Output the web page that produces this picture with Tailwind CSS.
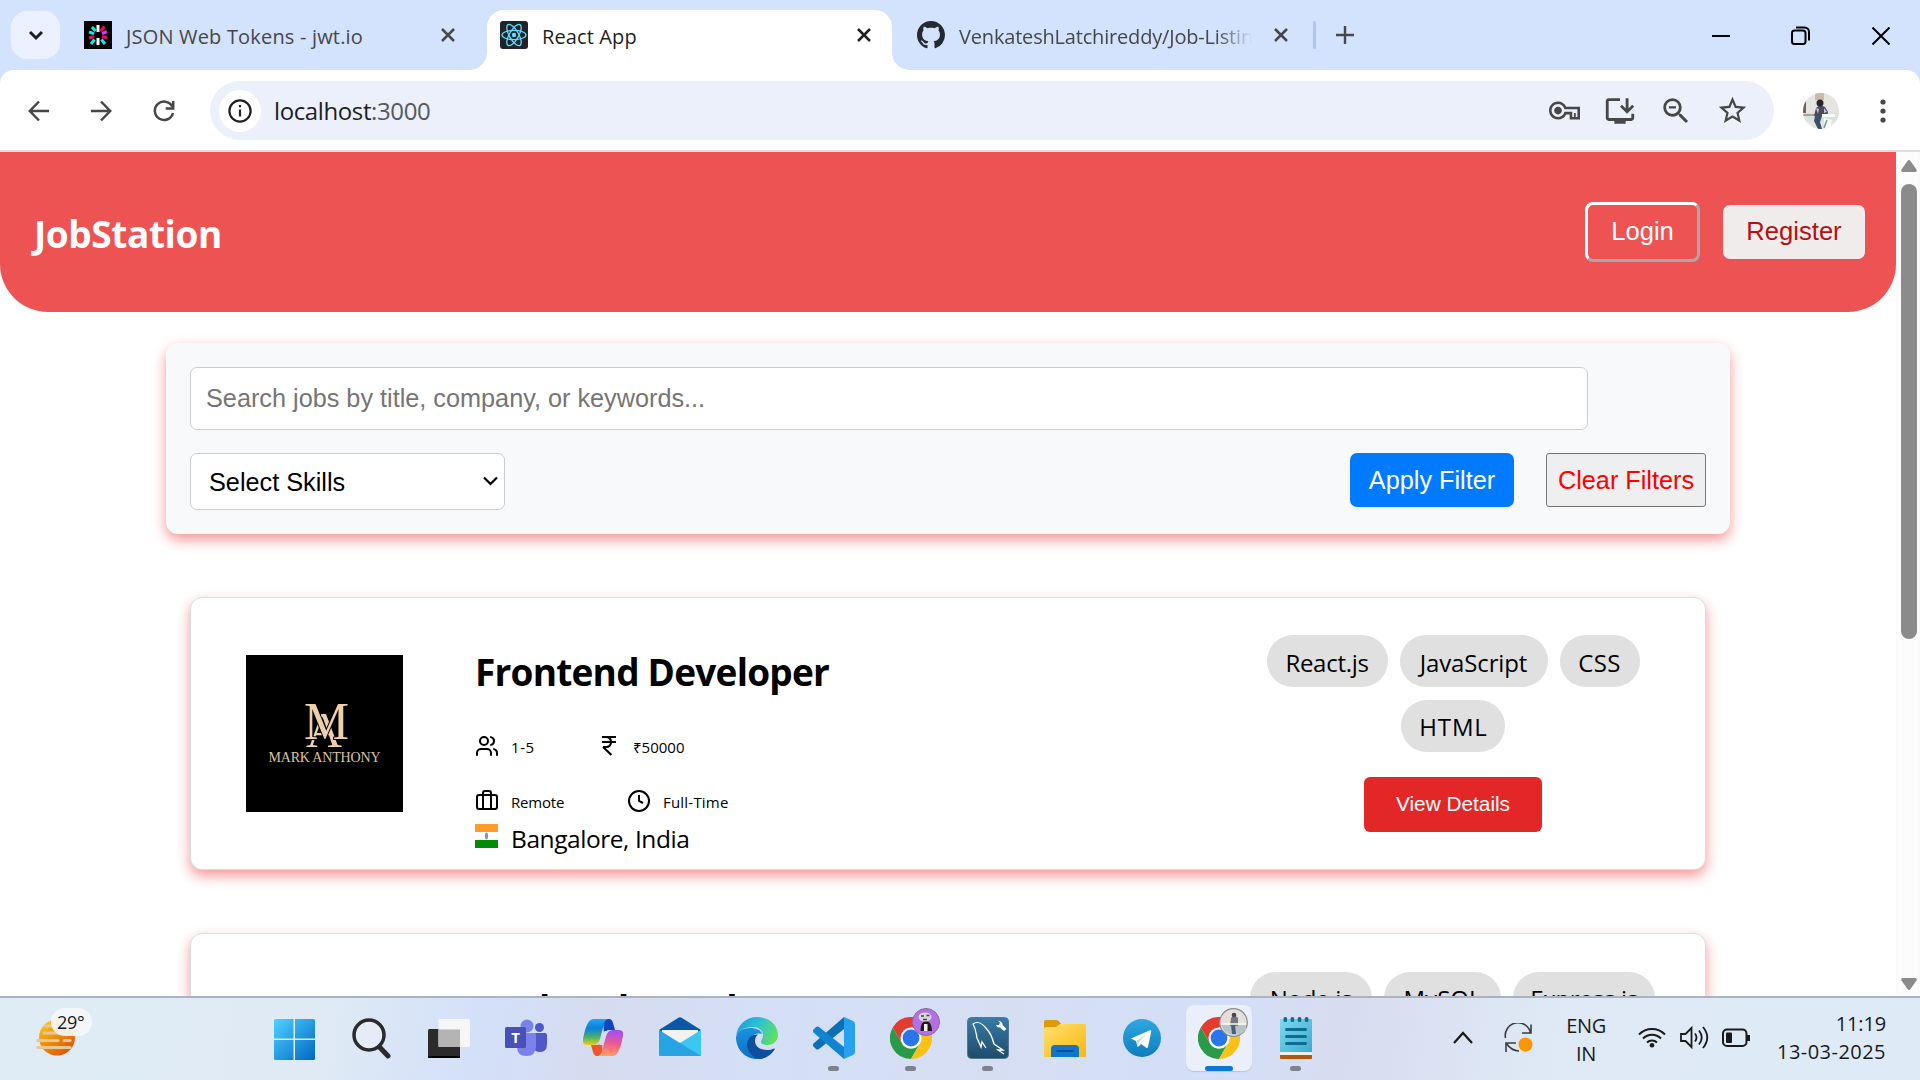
<!DOCTYPE html>
<html lang="en">
<head>
<meta charset="utf-8">
<title>React App</title>
<script src="https://cdn.jsdelivr.net/npm/@tailwindcss/browser@4"></script>
</head>
<body class="flex h-[1080px] w-[1920px] flex-col overflow-hidden bg-white font-['Open_Sans','Noto_Sans',sans-serif] text-black">

<!-- Tab strip -->
<header class="flex h-[70px] shrink-0 items-start bg-[#d3e2fd] text-[20px] leading-[30px] text-[#474747]">
  <button class="mt-[11px] ml-[11px] grid h-12 w-[49px] place-items-center rounded-2xl bg-[#ebf1fe]">
    <svg class="size-[16px]" viewBox="0 0 16 16" fill="none" stroke="#1f1f1f" stroke-width="3"><path d="M2 5l6 6 6-6"/></svg>
  </button>
  <div class="mt-[10px] flex h-[50px] w-[427px] items-center pl-6">
    <svg class="size-7 bg-black" viewBox="0 0 28 28" stroke-width="3">
      <g stroke="#fff"><path d="M14 4v7M14 17v7"/></g>
      <g stroke="#00f2e6"><path d="M10.5 18.500l-3.500 4.500M17.500 18.500l3.500 4.500M5 11l5 1.600M8 6l3.500 4"/></g>
      <g stroke="#fb015b"><path d="M16.500 10L20.500 5.500M23 17l-5-1.500M10 15.500L5 17"/></g>
      <g stroke="#d63aff"><path d="M18 12.500l5-1.800"/></g>
    </svg>
    <span class="ml-[14px] w-[314px] pt-[3px] tracking-[0.009em] whitespace-nowrap">JSON Web Tokens - jwt.io</span>
    <svg class="size-[16px]" viewBox="0 0 16 16" stroke="#474747" stroke-width="2.500"><path d="M2 2l12 12M14 2L2 14"/></svg>
  </div>
  <div class="relative mt-[10px] flex h-[60px] w-[405px] items-center rounded-t-[17px] bg-white pb-[10px] pl-[13px] text-[#1f1f1f]">
    <span class="absolute bottom-0 -left-[17px] size-[17px] bg-[radial-gradient(circle_at_0_0,transparent_16.5px,#fff_17px)]"></span>
    <span class="absolute -right-[17px] bottom-0 size-[17px] bg-[radial-gradient(circle_at_100%_0,transparent_16.5px,#fff_17px)]"></span>
    <svg class="size-7 rounded-[3px] bg-[#20232a]" viewBox="-14 -14 28 28" fill="none" stroke="#61dafb" stroke-width="1.300">
      <ellipse rx="12" ry="4.600"/><ellipse rx="12" ry="4.600" transform="rotate(60)"/><ellipse rx="12" ry="4.600" transform="rotate(120)"/><circle r="2.200" fill="#61dafb" stroke="none"/>
    </svg>
    <span class="w-[328px] pt-[3px] pl-[14px] tracking-[0.006em]">React App</span>
    <svg class="size-[16px]" viewBox="0 0 16 16" stroke="#1f1f1f" stroke-width="2.500"><path d="M2 2l12 12M14 2L2 14"/></svg>
  </div>
  <div class="mt-[10px] flex h-[50px] items-center pl-[25px]">
    <svg class="size-7" viewBox="0 0 16 16" fill="#24292f"><path d="M8 0C3.58 0 0 3.58 0 8c0 3.54 2.29 6.53 5.47 7.59.4.07.55-.17.55-.38 0-.19-.01-.82-.01-1.49-2.01.37-2.53-.49-2.69-.94-.09-.23-.48-.94-.82-1.13-.28-.15-.68-.52-.01-.53.63-.01 1.08.58 1.23.82.72 1.21 1.87.87 2.33.66.07-.52.28-.87.51-1.07-1.78-.2-3.64-.89-3.64-3.95 0-.87.31-1.59.82-2.15-.08-.2-.36-1.02.08-2.12 0 0 .67-.21 2.2.82.64-.18 1.32-.27 2-.27s1.36.09 2 .27c1.53-1.04 2.2-.82 2.2-.82.44 1.1.16 1.92.08 2.12.51.56.82 1.27.82 2.15 0 3.07-1.87 3.75-3.65 3.95.29.25.54.73.54 1.48 0 1.07-.01 1.93-.01 2.2 0 .21.15.46.55.38A8.01 8.01 0 0 0 16 8c0-4.42-3.58-8-8-8z"/></svg>
    <span class="ml-[14px] w-[293px] overflow-hidden mask-r-from-88% pt-[3px] tracking-[-0.009em] whitespace-nowrap">VenkateshLatchireddy/Job-Listing</span>
    <svg class="ml-[21px] size-[16px]" viewBox="0 0 16 16" stroke="#474747" stroke-width="2.500"><path d="M2 2l12 12M14 2L2 14"/></svg>
    <span class="ml-[24px] h-7 w-[3px] rounded-full bg-[#a8c7fa]"></span>
    <svg class="ml-[20px] size-[18px]" viewBox="0 0 18 18" stroke="#474747" stroke-width="2.400"><path d="M9 0v18M0 9h18"/></svg>
  </div>
  <div class="mt-[26px] mr-[30px] ml-auto flex items-center text-black">
    <svg class="size-[18px]" viewBox="0 0 18 18" stroke="currentColor" stroke-width="2"><path d="M0 9h18"/></svg>
    <svg class="ml-[61px] size-[19px]" viewBox="0 0 19 19" fill="none" stroke="currentColor" stroke-width="2"><rect x="1" y="4.500" width="13.500" height="13.500" rx="2.500"/><path d="M5 1.500h8.500a4.500 4.500 0 0 1 4.500 4.500v8.500"/></svg>
    <svg class="ml-[62px] size-[18px]" viewBox="0 0 18 18" stroke="currentColor" stroke-width="2"><path d="M.5.5l17 17M17.500.5l-17 17"/></svg>
  </div>
</header>

<!-- Toolbar -->
<div class="shrink-0 bg-[#d3e2fd]">
<div class="flex h-[82px] items-center rounded-t-[14px] border-b-2 border-[#dcdee1] bg-white pt-px pr-[34px] pl-7 text-[#474747]">
  <svg class="h-[22px] w-[21px]" viewBox="0 0 21 22" fill="none" stroke="currentColor" stroke-width="2.500"><path d="M21 11H2M11 1.500L1.800 11l9.200 9.500"/></svg>
  <svg class="ml-[42px] h-[22px] w-[21px]" viewBox="0 0 21 22" fill="none" stroke="currentColor" stroke-width="2.500"><path d="M0 11h19M10 1.500l9.200 9.500-9.200 9.500"/></svg>
  <svg class="ml-[41px] size-[22px]" viewBox="0 0 22 22" fill="none" stroke="currentColor" stroke-width="2.500"><path d="M20 13a9.200 9.200 0 1 1-.8-6.500"/><path d="M20.200 1v7.500h-7.500"/></svg>
  <div class="ml-[35px] flex h-[59px] w-[1564px] items-center rounded-full bg-[#ebf0fa] pr-[25px] pl-[9px]">
    <span class="grid size-[42px] place-items-center rounded-full bg-white">
      <svg class="size-6" viewBox="0 0 24 24" fill="none" stroke="#1f1f1f" stroke-width="2.200"><circle cx="12" cy="12" r="10.600"/><path d="M12 10.500v7M12 6v2.300"/></svg>
    </span>
    <span class="ml-[13px] pt-px text-[24px] leading-[32px] tracking-[-0.016em] text-[#1f1f1f]">localhost<span class="text-[#55585c]">:3000</span></span>
    <svg class="ml-auto size-[31px]" viewBox="0 0 24 24" fill="currentColor"><path d="M22 19h-6v-4h-2.680c-1.140 2.420-3.600 4-6.320 4-3.860 0-7-3.140-7-7s3.140-7 7-7c2.720 0 5.170 1.580 6.320 4H24v10h-2zm-4-2h4v-6H11.940l-.23-.67C11.010 8.340 9.110 7 7 7c-2.760 0-5 2.240-5 5s2.240 5 5 5c2.110 0 4.010-1.340 4.710-3.330l.23-.67H18v4zM7 15c-1.650 0-3-1.350-3-3s1.350-3 3-3 3 1.350 3 3-1.350 3-3 3zM19.300 14h1.400v3.500h-1.400z"/></svg>
    <svg class="ml-[23px] size-[34px]" viewBox="0 0 24 24" fill="currentColor"><path d="M20 17H4V5h8V3H4c-1.100 0-2 .9-2 2v12c0 1.100.9 2 2 2h4v2h8v-2h4c1.100 0 2-.9 2-2v-3h-2v3zM17 14l5-5-1.410-1.410L18 10.170V3h-2v7.170l-2.590-2.580L12 9l5 5z"/></svg>
    <svg class="ml-[22px] size-[34px]" viewBox="0 0 24 24" fill="currentColor"><path d="M15.500 14h-.79l-.28-.27A6.471 6.471 0 0 0 16 9.500 6.500 6.500 0 1 0 9.500 16c1.610 0 3.090-.59 4.230-1.570l.27.28v.79l5 4.990L20.490 19l-4.990-5zm-6 0C7.010 14 5 11.990 5 9.500S7.010 5 9.500 5 14 7.010 14 9.500 11.990 14 9.500 14zM7 8.700h5v1.600H7z"/></svg>
    <svg class="ml-[23px] size-[33px]" viewBox="0 0 24 24" fill="currentColor"><path d="m22 9.240-7.190-.62L12 2 9.190 8.630 2 9.240l5.460 4.730L5.820 21 12 17.270 18.180 21l-1.630-7.030L22 9.240zM12 15.400l-3.760 2.270 1-4.280-3.320-2.880 4.380-.38L12 6.100l1.710 4.040 4.380.38-3.320 2.880 1 4.280L12 15.400z"/></svg>
  </div>
  <svg class="ml-[29px] size-9 rounded-full" viewBox="0 0 36 36">
    <rect width="36" height="36" fill="#e6e4df"/><rect width="36" height="9" y="20" fill="#d5e2df"/><rect x="12" width="9" height="7" fill="#c9bca6"/><rect y="5" width="3" height="15" fill="#6c6256"/><rect x="0" y="21" width="12" height="2" fill="#a9a596"/>
    <path d="M11 23l2-8 4-3 5 2 3 5-1 5z" fill="#4a4a5a"/><circle cx="17" cy="10" r="3.500" fill="#2b2527"/><path d="M12 23h7l-2 6 2 7h-4l-4-8z" fill="#39506f"/><path d="M13 15l3 1-1 5zM21 15l3 4-3 1z" fill="#b9c6e0"/><path d="M19 21h13v3H19zM21 25l8 2-2 8h-6z" fill="#f6faf8"/><path d="M24 27l-3 8" stroke="#77998a" stroke-width="1.500"/>
  </svg>
  <svg class="ml-auto h-6 w-[6px]" viewBox="0 0 6 24" fill="currentColor"><circle cx="3" cy="3" r="2.600"/><circle cx="3" cy="12" r="2.600"/><circle cx="3" cy="21" r="2.600"/></svg>
</div>
</div>

<!-- Page viewport -->
<div class="flex h-[844px] shrink-0 overflow-hidden">
  <main class="w-[1896px] overflow-hidden">
    <nav class="flex h-40 items-center rounded-b-[48px] bg-[#ee5353] pr-[31px] pl-[34px]">
      <h1 class="pt-[3px] text-[37px] leading-[40px] font-bold tracking-[-0.011em] text-white">JobStation</h1>
      <button class="ml-auto h-[60px] w-[115px] rounded-[8px] border-3 border-t-white border-r-[#a9a9a9] border-b-[#a9a9a9] border-l-white pb-px font-['Liberation_Sans',sans-serif] text-[25.6px] text-white">Login</button>
      <button class="ml-[23px] h-[54px] w-[142px] rounded-[7px] bg-[#f0eceb] pb-px font-['Liberation_Sans',sans-serif] text-[25.6px] text-[#b80f0f]">Register</button>
    </nav>

    <section class="mt-[31px] ml-[166px] h-[191px] w-[1564px] rounded-[12px] bg-[#f8f9fb] px-6 pt-6 font-['Liberation_Sans',sans-serif] text-[25.25px] shadow-[0_6px_13px_rgba(238,83,83,0.6)]">
      <input class="block h-[63px] w-[1398px] rounded-[7px] border border-[#ccc] bg-white px-[15px] placeholder:text-[#757575]" placeholder="Search jobs by title, company, or keywords...">
      <div class="mt-[23px] flex">
        <div class="flex h-[57px] w-[315px] items-center justify-between rounded-[7px] border border-[#ccc] bg-white pr-[6px] pl-[18px]">
          <span class="pt-[2px]">Select Skills</span>
          <svg class="mb-px h-[10px] w-[15px]" viewBox="0 0 15 10" fill="none" stroke="#000" stroke-width="2.200"><path d="M1 1.500L7.500 8 14 1.500"/></svg>
        </div>
        <button class="ml-auto h-[54px] w-[164px] rounded-[7px] bg-[#007bff] pt-[2px] text-white">Apply Filter</button>
        <button class="ml-8 h-[54px] w-[160px] rounded-[3px] border border-[#767676] bg-[#efefef] pt-[2px] text-[red]">Clear Filters</button>
      </div>
    </section>

    <article class="mt-[63px] ml-[190px] flex h-[273px] w-[1516px] rounded-[12px] border border-[#ddd] bg-white shadow-[0_6px_13px_rgba(238,83,83,0.6)]">
      <svg class="mt-[57px] ml-[55px] size-[157px] shrink-0 bg-black" viewBox="0 0 157 157" fill="#ecd0ab">
        <text class="font-['Liberation_Serif',serif] text-[50px]" x="60" y="92">A</text>
        <text class="font-['Liberation_Serif',serif] text-[52px]" x="58" y="84" textLength="45" lengthAdjust="spacingAndGlyphs" stroke="#000" stroke-width="2" paint-order="stroke">M</text>
        <text class="font-['Liberation_Serif',serif] text-[14px]" x="22.500" y="107" fill="#dcc3a4" textLength="112">MARK ANTHONY</text>
      </svg>
      <div class="ml-[72px] w-[600px] pt-[54px]">
        <h2 class="text-[37px] leading-[40px] font-bold tracking-[-0.021em]">Frontend Developer</h2>
        <div class="mt-[42px] flex h-6 text-[15px] leading-[26px]">
          <svg class="size-6" viewBox="0 0 24 24" fill="none" stroke="currentColor" stroke-width="2" stroke-linecap="round"><path d="M16 21v-2a4 4 0 0 0-4-4H6a4 4 0 0 0-4 4v2"/><circle cx="9" cy="7" r="4"/><path d="M22 21v-2a4 4 0 0 0-3-3.870M16 3.130a4 4 0 0 1 0 7.750"/></svg>
          <span class="ml-[12px] w-[86px] tracking-[0.037em]">1-5</span>
          <svg class="size-6" viewBox="0 0 24 24" fill="none" stroke="currentColor" stroke-width="2.200"><path d="M5 3h14M5 8h14M6 13l8.500 8M6 13h3M9 13c6.670 0 6.670-10 0-10"/></svg>
          <span class="ml-[12px]">₹50000</span>
        </div>
        <div class="mt-[31px] flex h-6 text-[15px] leading-[26px]">
          <svg class="size-6" viewBox="0 0 24 24" fill="none" stroke="currentColor" stroke-width="2"><path d="M16 20V4a2 2 0 0 0-2-2h-4a2 2 0 0 0-2 2v16"/><rect x="2" y="6" width="20" height="14" rx="2"/></svg>
          <span class="ml-[12px] w-[116px] tracking-[-0.013em]">Remote</span>
          <svg class="size-6" viewBox="0 0 24 24" fill="none" stroke="currentColor" stroke-width="2"><circle cx="12" cy="12" r="10"/><path d="M12 6v6l4 2"/></svg>
          <span class="ml-[12px] tracking-[0.014em]">Full-Time</span>
        </div>
        <div class="mt-[8px] flex text-[24.5px] leading-[36px] tracking-[-0.018em]">
          <svg class="mt-[3px] h-6 w-[23px]" viewBox="0 0 23 24"><rect width="23" height="8" fill="#ff9a2b"/><rect y="8" width="23" height="8" fill="#fff"/><rect y="16" width="23" height="8" fill="#058a05"/><ellipse cx="11.500" cy="12" rx="1.600" ry="3.400" fill="#8c8cc8"/></svg>
          <span class="ml-[13px]">Bangalore, India</span>
        </div>
      </div>
      <div class="mr-[63px] ml-auto flex w-[378px] flex-wrap content-start justify-center gap-x-[12px] gap-y-[13px] pt-[37px] text-[24px] leading-[52px]">
        <span class="h-[52px] w-[121px] rounded-full bg-[#e0e0e0] pt-[2px] text-center tracking-[-0.012em]">React.js</span>
        <span class="h-[52px] w-[148px] rounded-full bg-[#e0e0e0] pt-[2px] text-center tracking-[-0.006em]">JavaScript</span>
        <span class="h-[52px] w-[80px] rounded-full bg-[#e0e0e0] pt-[2px] text-center tracking-[0.015em]">CSS</span>
        <span class="h-[52px] w-[104px] rounded-full bg-[#e0e0e0] pt-px pl-px text-center tracking-[0.035em]">HTML</span>
        <div class="flex w-full justify-center pt-3">
          <button class="h-[55px] w-[178px] rounded-[6px] bg-[#e32727] pb-px font-['Liberation_Sans',sans-serif] text-[20.8px] text-white">View Details</button>
        </div>
      </div>
    </article>

    <article class="mt-[63px] ml-[190px] flex h-[273px] w-[1516px] rounded-[12px] border border-[#ddd] bg-white shadow-[0_6px_13px_rgba(238,83,83,0.6)]">
      <div class="ml-[284px] w-[600px] pt-[55px]">
        <h2 class="text-[37px] leading-[40px] font-bold tracking-[-0.021em]">Backend Developer</h2>
      </div>
      <div class="mr-[50px] ml-auto flex content-start gap-x-[12px] pt-[38px] text-[24px] leading-[52px]">
        <span class="h-[52px] w-[122px] rounded-full bg-[#e0e0e0] pt-px text-center tracking-[-0.012em]">Node.js</span>
        <span class="h-[52px] w-[117px] rounded-full bg-[#e0e0e0] pt-px text-center">MySQL</span>
        <span class="h-[52px] w-[142px] rounded-full bg-[#e0e0e0] pt-px text-center tracking-[-0.012em]">Express.js</span>
      </div>
    </article>
  </main>
  <!-- Scrollbar -->
  <div class="flex w-6 flex-col items-center border-x border-[#fafafa] bg-[#fcfcfc] pt-2 pl-[2px]">
    <svg class="h-[12px] w-4" viewBox="0 0 16 12" fill="#8b8b8b"><path d="M6.500 1Q8-.8 9.500 1L15.500 9.500Q16.500 12 14 12H2Q-.5 12 .5 9.500z"/></svg>
    <span class="mt-[12px] h-[455px] w-4 rounded-full bg-[#8b8b8b]"></span>
    <svg class="mt-auto mb-[6px] h-[12px] w-4" viewBox="0 0 16 12" fill="#8b8b8b"><path d="M6.500 11Q8 12.800 9.500 11L15.500 2.500Q16.500 0 14 0H2Q-.5 0 .5 2.500z"/></svg>
  </div>
</div>

<!-- Taskbar -->
<footer class="flex h-[84px] shrink-0 border-t-2 border-[#abb3c3] bg-[linear-gradient(100deg,#e0ecf5_0%,#dfeaf5_17%,#d3e0f8_25%,#d6dcf0_31%,#d4dff6_42%,#d6def2_52%,#d3dff7_63%,#d8dcf0_70%,#dee9f5_80%,#deebf6_100%)] text-[#1a1a1a]">
  <div class="w-[256px] shrink-0 pt-[10px] pl-[36px]">
    <div class="relative h-12 w-14">
      <svg class="absolute top-[11px] left-0 h-[38px] w-10" viewBox="0 0 40 38"><defs><linearGradient id="sun" x1="0" y1="0" x2=".7" y2="1"><stop stop-color="#ffd21c"/><stop offset="1" stop-color="#e35205"/></linearGradient></defs><circle cx="21" cy="18.500" r="18" fill="url(#sun)"/><g stroke="#e2ca93" stroke-width="3.200" stroke-linecap="round"><path d="M9 7h16M8 14h14M1.800 21.500H22M28 21.500h6M1.800 28.500H34"/></g></svg>
      <span class="absolute top-0 left-[15px] h-7 w-[41px] rounded-full bg-[#f6f8fb]/90 pl-[6px] text-[18px] leading-7 tracking-[-0.016em]">29°</span>
    </div>
  </div>
  <div class="grid shrink-0 grid-cols-[repeat(14,77px)]">
    <div class="flex justify-center pt-[21px]">
      <svg class="size-[41px]" viewBox="0 0 41 41"><defs><linearGradient id="win" x1="0" y1="0" x2="1" y2="1"><stop stop-color="#4fd3ff"/><stop offset="1" stop-color="#0067c5"/></linearGradient></defs><path d="M1.500 0h18v19.500H0v-18Q0 0 1.500 0zM21 0h18.500Q41 0 41 1.500v18H21zM0 21h19.500v20h-18Q0 41 0 39.500zM21 21h20v18.500Q41 41 39.500 41H21z" fill="url(#win)"/></svg>
    </div>
    <div class="flex justify-center pt-[20px]">
      <svg class="h-[41px] w-[39px]" viewBox="0 0 39 41" fill="none" stroke="#2b2b2b"><circle cx="17" cy="17" r="15" stroke-width="3.500" fill="#e5ecf6"/><path d="M27.500 29l8.500 9" stroke-width="5" stroke-linecap="round"/></svg>
    </div>
    <div class="flex justify-center pt-[21px]">
      <svg class="h-10 w-[42px]" viewBox="0 0 42 40"><rect y="10" width="32" height="29" rx="1.500" fill="#2b2b2b"/><rect y="37" width="32" height="2" fill="#000"/><rect x="10.500" width="31.500" height="28" rx="1.500" fill="#f6f6f6"/><rect x="10.500" y="10.500" width="21.500" height="17.500" fill="#b4b4b4"/></svg>
    </div>
    <div class="flex justify-center pt-[21px]">
      <svg class="h-[38px] w-[42px]" viewBox="0 0 42 38"><circle cx="34.500" cy="8.500" r="4.500" fill="#4f58c4"/><path d="M30 14h10q2 0 2 2v9q0 8-7 8-5 0-7-4z" fill="#4f58c4"/><circle cx="22" cy="7" r="6.500" fill="#7b83eb"/><path d="M14 14h15q2 0 2 2v11q0 10-9.500 10T12 28z" fill="#7b83eb"/><rect y="8" width="21" height="21" rx="1.500" fill="#4950b8"/><text class="font-['Open_Sans',sans-serif] text-[15px] font-bold" x="10.500" y="24" text-anchor="middle" fill="#fff">T</text></svg>
    </div>
    <div class="flex justify-center pt-[21px]">
      <svg class="h-[37px] w-10" viewBox="0 0 40 37"><defs><linearGradient id="cpa" x1="0" y1="0" x2="0" y2="1"><stop stop-color="#1ea7f0"/><stop offset=".35" stop-color="#0a7fdc"/><stop offset=".7" stop-color="#4bb06a"/><stop offset="1" stop-color="#f2cf0c"/></linearGradient><linearGradient id="cpb" x1=".3" y1="0" x2=".2" y2="1"><stop stop-color="#a34df0"/><stop offset=".5" stop-color="#ef5a90"/><stop offset="1" stop-color="#ffa45c"/></linearGradient></defs>
      <path d="M20 0h6q3 0 4 4l2 7h-6q-3 0-5 4z" fill="#1345bf"/><path d="M20 37h-6q-3 0-4-4l-2-7h6q3 0 5-4z" fill="#f0552f"/><path d="M11 0h14q-3 1-4 5l-4 15q-2 6-7 6H4q-5 0-4-6Q2 9 5 4q2-4 6-4z" fill="url(#cpa)"/><path d="M29 37H15q3-1 4-5l4-15q2-6 7-6h6q5 0 4 6-2 11-5 16-2 4-6 4z" fill="url(#cpb)"/><path d="M21.500 12h3.500l-5.500 14H16q1-1 1.500-3z" fill="#d5dcf1"/></svg>
    </div>
    <div class="flex justify-center pt-[19px]">
      <svg class="h-10 w-[42px]" viewBox="0 0 42 40"><path d="M0 13L19 1q2-1.300 4 0l19 12-21 14z" fill="#0a58a5"/><path d="M3 13h36v5L21 28 3 18z" fill="#f2f2f2"/><path d="M42 13v26H0l21-13z" fill="#3cc6f2"/><path d="M0 13l42 26H1q-1 0-1-1z" fill="#28a3e4"/></svg>
    </div>
    <div class="flex justify-center pt-[19px]">
      <svg class="size-[42px]" viewBox="0 0 42 42"><defs><linearGradient id="eg" x1="0" y1=".3" x2="1" y2=".6"><stop stop-color="#1b9de2"/><stop offset=".5" stop-color="#2fc3d0"/><stop offset="1" stop-color="#62e05a"/></linearGradient><linearGradient id="eb" x1="0" y1="0" x2="0" y2="1"><stop stop-color="#1a93dd"/><stop offset="1" stop-color="#0a6fc6"/></linearGradient></defs>
      <path d="M0 20C1 8 10 0 21 0c12 0 21 8 21 18 0 6-5 10-10 10-4 0-7-1-7-3s2-3 2-7c0-5-5-8-11-8C8 10 2 14 0 20z" fill="url(#eg)"/><path d="M0 20c2-6 7-9 14-9 6 0 11 2 12 6-8-2-12 3-12 8 0 9 7 14 13 16-2 1-4 1-6 1C9 42 0 32 0 20z" fill="url(#eb)"/><path d="M22 17.500c-7-.5-11 4.500-11 10.500C11 35 17 41 24 42c6-.5 11-4 14.500-9.200q.6-1.500-.8-1.300C36 32.500 34 33 31 33c-6 0-12-3-12-9 0-3 1-5 3-6.500z" fill="#0e4e9c"/></svg>
    </div>
    <div class="flex flex-col items-center pt-[19px]">
      <svg class="size-[42px]" viewBox="0 0 42 42"><path d="M31 0v12L6 32q-1.500 1-3 0l-2.500-2.500q-1-1.500 0-3z" fill="#0a6fb5"/><path d="M31 42V30L6 10q-1.500-1-3 0L.5 12.500q-1 1.500 0 3z" fill="#1184d0"/><path d="M31 0l9 4q2 1 2 3v28q0 2-2 3l-9 4z" fill="#27a0f0"/></svg>
      <span class="mt-[7px] h-[5px] w-[11px] rounded-full bg-[#7e828d]"></span>
    </div>
    <div class="relative flex flex-col items-center pt-[19px]">
      <svg class="size-[42px]" viewBox="0 0 48 48"><path d="M24 12h20.800A24 24 0 0 0 3.200 12l10.400 18z" fill="#e33b2e"/><path d="M3.200 12A24 24 0 0 0 24 48l10.400-18A12 12 0 0 1 13.600 30z" fill="#2a9a49"/><path d="M44.800 12A24 24 0 0 1 24 48l10.400-18A12 12 0 0 0 24 12z" fill="#fbc116"/><circle cx="24" cy="24" r="12" fill="#fff"/><circle cx="24" cy="24" r="9.600" fill="#2a74ec"/></svg>
      <span class="mt-[7px] h-[5px] w-[11px] rounded-full bg-[#7e828d]"></span>
      <svg class="absolute top-[10px] left-[40px] size-7" viewBox="0 0 28 28"><circle cx="14" cy="14" r="13.500" fill="#b66fe3" stroke="#8a68a5"/><path d="M8.500 23q0-10 5.500-10t6 10z" fill="#1e1a20"/><path d="M12 23v-7h3.500v7z" fill="#f2f2f2"/><ellipse cx="13" cy="9" rx="6.500" ry="4.500" fill="#d9d5dc"/><path d="M9 8h3M14.500 7.500h3M11 11.500h4" stroke="#444" stroke-width="1.300"/></svg>
    </div>
    <div class="flex flex-col items-center pt-[19px]">
      <svg class="size-[42px]" viewBox="0 0 42 42"><defs><linearGradient id="my" x1="0" y1="0" x2="0" y2="1"><stop stop-color="#387ba7"/><stop offset="1" stop-color="#1f4b69"/></linearGradient></defs><rect x=".5" y=".5" width="41" height="41" rx="4" fill="url(#my)" stroke="#52788f"/><path d="M19 31l-4-6-1 5-4-9c-1-5-1-9-4-14 4-3 9-1 13 4 5 6 6 9 8 16l9 6-5 0 6 4" fill="none" stroke="#fff" stroke-width="1.300"/><path d="M31 3.500l2 2-1 2.500-3 0q1 3 4 2.500l4 3.500 2.500-2-4-4q.5-3.500-4.500-4.500z" fill="#fff"/></svg>
      <span class="mt-[7px] h-[5px] w-[11px] rounded-full bg-[#7e828d]"></span>
    </div>
    <div class="flex justify-center pt-[22px]">
      <svg class="h-[37px] w-[42px]" viewBox="0 0 42 37"><defs><linearGradient id="fo" x1="0" y1="0" x2="1" y2="1"><stop stop-color="#ffdf72"/><stop offset="1" stop-color="#f8b80e"/></linearGradient></defs><path d="M0 10V2q0-2 2-2h10q2 0 3 1.500L18 5v5z" fill="#dd9a05"/><path d="M0 9q0-2 2-2h10l4-3h25q1 0 1 1v31q0 1-1 1H1q-1 0-1-1z" fill="url(#fo)"/><path d="M7 37v-8q0-4 4-4h20q4 0 4 4v8z" fill="#0f76cc"/><path d="M12.500 31h17" stroke="#0a4f97" stroke-width="2"/></svg>
    </div>
    <div class="flex justify-center pt-[21px]">
      <svg class="size-[38px]" viewBox="0 0 38 38"><defs><linearGradient id="tg" x1="0" y1="0" x2="0" y2="1"><stop stop-color="#2fa8e4"/><stop offset="1" stop-color="#0e7dba"/></linearGradient></defs><circle cx="19" cy="19" r="19" fill="url(#tg)"/><path d="M8 19.500L27 11.300q1.500-.5 1.200 1.200L25 28q-.6 1.500-2 .6l-5-3.600-2.500 2.500q-1 .8-1.200-.6L13 22z" fill="#fff"/><path d="M13.500 22L24 14.500 16 23l-1.200 4.500z" fill="#b9dcf0"/></svg>
    </div>
    <div class="relative flex flex-col items-center pt-[7px]">
      <div class="flex h-[66px] w-[66px] flex-col items-center rounded-lg bg-[#eaeffa] pt-[12px] shadow-[0_1px_1px_rgba(0,0,0,0.12)]">
        <svg class="size-[42px]" viewBox="0 0 48 48"><path d="M24 12h20.800A24 24 0 0 0 3.200 12l10.400 18z" fill="#e33b2e"/><path d="M3.200 12A24 24 0 0 0 24 48l10.400-18A12 12 0 0 1 13.600 30z" fill="#2a9a49"/><path d="M44.800 12A24 24 0 0 1 24 48l10.400-18A12 12 0 0 0 24 12z" fill="#fbc116"/><circle cx="24" cy="24" r="12" fill="#fff"/><circle cx="24" cy="24" r="9.600" fill="#2a74ec"/></svg>
        <span class="mt-[7px] h-[5px] w-7 rounded-full bg-[#0a7ad6]"></span>
      </div>
      <svg class="absolute top-[10px] left-[39px] size-[29px]" viewBox="0 0 29 29"><circle cx="14.500" cy="14.500" r="13.800" fill="#e3dfda" stroke="#8c8c8c" stroke-width="1.200"/><path d="M2 17h25v5l-5 4-8 1-8-3z" fill="#b7c3c4"/><path d="M11 18l1-8 3-3 4 3v8z" fill="#77747f"/><circle cx="15" cy="7" r="2.300" fill="#4b4446"/><path d="M12 17h4l1 9h-4z" fill="#47607d"/><path d="M2 16h25" stroke="#fafafa" stroke-width="1.500"/></svg>
    </div>
    <div class="flex flex-col items-center pt-[19px]">
      <svg class="h-[42px] w-8" viewBox="0 0 32 42"><defs><linearGradient id="np" x1="0" y1="0" x2="1" y2="1"><stop stop-color="#7ddaf0"/><stop offset="1" stop-color="#3fa9cc"/></linearGradient></defs><rect y="37" width="32" height="5" rx="1" fill="#b2560d"/><rect y="34" width="32" height="4" fill="#eee"/><path d="M0 3q0-1 1-1h30q1 0 1 1v32H0z" fill="url(#np)"/><g fill="#0b6d92"><rect x="3.500" width="3.600" height="5" rx="1.500"/><rect x="10.600" width="3.600" height="5" rx="1.500"/><rect x="17.700" width="3.600" height="5" rx="1.500"/><rect x="24.800" width="3.600" height="5" rx="1.500"/></g><path d="M6.500 12.500h19M6.500 19.500h19M6.500 26.500h19" stroke="#0b6d92" stroke-width="3" stroke-linecap="round"/></svg>
      <span class="mt-[7px] h-[5px] w-[11px] rounded-full bg-[#7e828d]"></span>
    </div>
  </div>
  <!-- System tray -->
  <div class="ml-auto flex shrink-0 pr-[34px] text-[20px]">
    <svg class="mt-[33px] h-[13px] w-5" viewBox="0 0 20 13" fill="none" stroke="currentColor" stroke-width="2.200"><path d="M1 12l9-10 9 10"/></svg>
    <svg class="mt-[25px] ml-[31px] h-[30px] w-[29px]" viewBox="0 0 29 30" fill="none" stroke="#3a3d42" stroke-width="1.600"><path d="M1.500 15a12.500 12.500 0 0 1 25-5M27 1.500V10h-9M12 20H2v9M2.500 20.500Q7 27.500 15 28"/><circle cx="21.500" cy="21.500" r="7" fill="#fb9705" stroke="none"/></svg>
    <div class="ml-[32px] w-[42px] pt-[14px] text-center leading-7 tracking-[-0.017em]">ENG<br>IN</div>
    <svg class="mt-[28px] ml-[31px] h-[22px] w-7" viewBox="0 0 28 22" fill="none" stroke="currentColor" stroke-width="2"><path d="M1 8.500a18 18 0 0 1 26 0M5 12.500a12.500 12.500 0 0 1 18 0M9 16.500a7.200 7.200 0 0 1 10 0"/><circle cx="14" cy="19.300" r="2.300" fill="currentColor" stroke="none"/></svg>
    <svg class="mt-[27px] ml-[14px] h-[25px] w-[29px]" viewBox="0 0 29 25" fill="none" stroke="currentColor" stroke-width="1.800"><path d="M1 9h4.500l6-6v19l-6-6H1zM15 8.500q3 4 0 8M19 5.500q5.500 7 0 14M23 2q8.500 10.500 0 21"/></svg>
    <svg class="mt-[30px] ml-[13px] h-5 w-[29px]" viewBox="0 0 29 20" fill="none" stroke="currentColor" stroke-width="2"><rect x="1" y="1.500" width="23.500" height="16.500" rx="4"/><rect x="4" y="4.500" width="6" height="10.500" rx="1" fill="currentColor" stroke="none"/><path d="M26.500 7v6" stroke-width="3"/></svg>
    <div class="ml-[25px] w-[110px] pt-[12px] text-right leading-7"><span class="tracking-[-0.007em]">11:19</span><br><span class="tracking-[0.023em]">13-03-2025</span></div>
  </div>
</footer>
</body>
</html>
